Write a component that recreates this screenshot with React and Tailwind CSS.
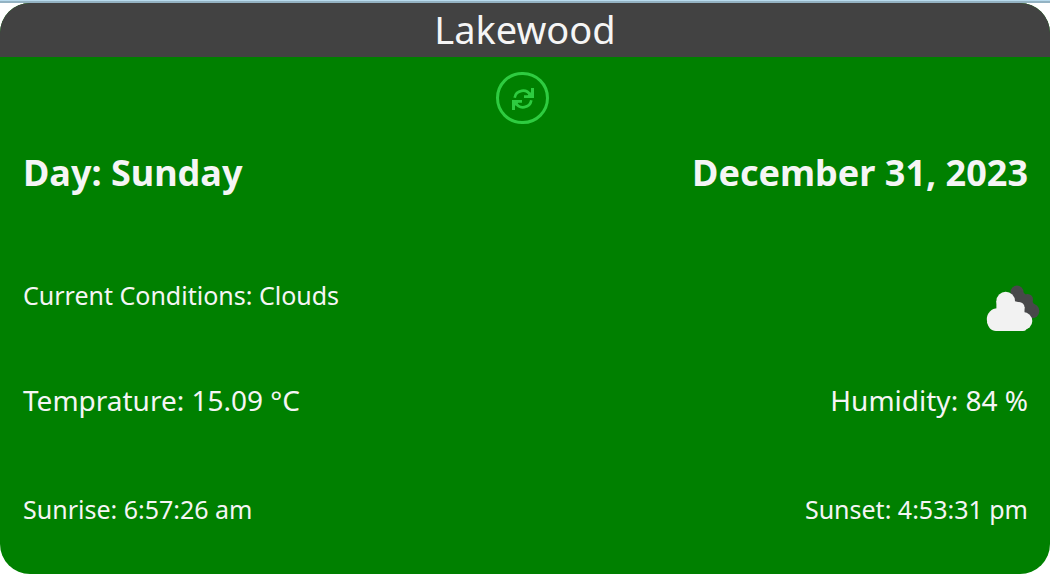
function RefreshHalf() {
  return (
    <>
      <path d="M105 113 A25 25 0 0 1 152 106" fill="none" stroke="currentColor" strokeWidth="8" />
      <path d="M154 84 H163 V114 H133 V106 H144 L154 96 Z" fill="currentColor" />
    </>
  );
}

function RefreshIcon() {
  return (
    <svg viewBox="97 84 66 66" className="size-[22px]" aria-hidden="true">
      <RefreshHalf />
      <g transform="rotate(180 130 117)">
        <RefreshHalf />
      </g>
    </svg>
  );
}

function CloudsIcon() {
  return (
    <svg viewBox="0 0 54 48" className="h-12 w-[54px]" role="img" aria-label="Clouds">
      <g fill="#48484a">
        <circle cx="31" cy="7" r="6.5" />
        <circle cx="41.5" cy="14.5" r="5.5" />
        <circle cx="46" cy="26" r="7.3" />
        <path d="M25 9 L36 6 L46 16 L50 22 L46 33 L34 28 Z" />
      </g>
      <g fill="#f2f2f2">
        <circle cx="11.5" cy="34" r="10.7" />
        <circle cx="19.7" cy="16" r="9.3" />
        <circle cx="33" cy="22.5" r="5.5" />
        <circle cx="37.3" cy="36" r="9" />
        <path d="M10.4 16 H28 L32 17 L38.5 22 V29 L40 45 Q39 46 37 46 H10 C5 46 2 42 1 37 L10.4 26 Z" />
      </g>
    </svg>
  );
}

function Row({ className, left, right }) {
  return (
    <div className={`flex items-start justify-between pl-[23px] pr-[22px] ${className}`}>
      <p>{left}</p>
      <p>{right}</p>
    </div>
  );
}

export default function App() {
  return (
    <main className="border-t border-[#b9dbee] bg-white font-['Noto_Sans',sans-serif] text-[#f5f5f5]">
      <div className="border-t-2 border-[#94b3c3]">
        <section className="overflow-hidden rounded-[30px] bg-[#008000] pb-[49px]">
          <h1 className="bg-[#424242] pb-[2px] text-center text-[38px] leading-[52px]">Lakewood</h1>
          <div className="flex justify-center pr-[6px] pt-[15px]">
            <button
              type="button"
              aria-label="Refresh"
              className="flex h-[52px] w-[53px] items-center justify-center rounded-full border-3 border-[#2ecc40] pl-[2px] pt-[2px] text-[#2ecc40]"
            >
              <RefreshIcon />
            </button>
          </div>
          <Row className="mt-6 text-[36px] font-bold leading-[50px]" left="Day: Sunday" right="December 31, 2023" />
          <div className="mt-[81px] flex items-start justify-between pl-[23px] pr-[10px] text-[25px] leading-8">
            <p>Current Conditions: Clouds</p>
            <div className="mt-[6px]">
              <CloudsIcon />
            </div>
          </div>
          <Row className="mt-[49px] text-[28px] leading-9" left="Temprature: 15.09 °C" right="Humidity: 84 %" />
          <Row className="mt-[75px] text-[25px] leading-8" left="Sunrise: 6:57:26 am" right="Sunset: 4:53:31 pm" />
        </section>
      </div>
    </main>
  );
}
